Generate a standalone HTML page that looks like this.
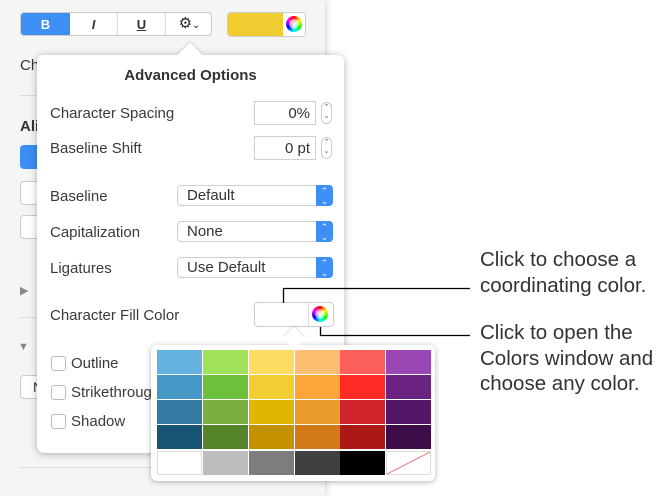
<!DOCTYPE html><html><head><style>
*{box-sizing:border-box;margin:0;padding:0}
body{width:668px;height:496px;overflow:hidden;background:#fff;font-family:"Liberation Sans",sans-serif;position:relative;color:#333}
.a{position:absolute}
.side{left:0;top:0;width:325px;height:496px;background:#f5f5f5;box-shadow:2px 0 6px rgba(0,0,0,.15)}
.lbl{font-size:15px;color:#3a3a3a}
.field{background:#fff;border:1px solid #cfcfcf;font-size:15px;text-align:right;padding:3px 5px}
.sel{background:#fff;border:1px solid #cfcfcf;border-radius:4px;font-size:15px;padding:1px 9px;height:21px}
.sel b{position:absolute;right:-1px;top:-1px;width:17px;height:21px;background:#3d8ef5;border-radius:0 4px 4px 0;color:#fff;font-size:9px;text-align:center;line-height:10px;padding-top:1px;font-weight:normal}
.step{width:11px;height:22px;border:1px solid #ccc;border-radius:6px;background:#fff;font-size:7px;text-align:center;line-height:9px;color:#555}
.cb{width:15px;height:15px;border:1px solid #bbb;border-radius:3px;background:#fff}
.grid div{position:absolute;width:45px;height:24px}
.note{font-size:20.5px;color:#333;line-height:25.5px}
</style></head><body>
<div class="a side"></div>
<div class="a" style="left:20px;top:467px;width:300px;height:1px;background:#ddd"></div>
<div class="a" style="left:20px;top:95px;width:300px;height:1px;background:#ddd"></div>
<div class="a" style="left:20px;top:317px;width:300px;height:1px;background:#ddd"></div>
<div class="a" style="left:20px;top:57px;font-size:15px;color:#333">Ch</div>
<div class="a" style="left:20px;top:118px;font-size:15px;font-weight:bold;color:#333">Ali</div>
<div class="a" style="left:20px;top:145px;width:30px;height:24px;background:#3d8ef5;border-radius:4px"></div>
<div class="a" style="left:20px;top:181px;width:30px;height:24px;background:#fff;border:1px solid #ccc;border-radius:4px"></div>
<div class="a" style="left:20px;top:215px;width:30px;height:24px;background:#fff;border:1px solid #ccc;border-radius:4px"></div>
<div class="a" style="left:20px;top:375px;width:30px;height:24px;background:#fff;border:1px solid #ccc;border-radius:4px;font-size:14px;padding:3px 12px">N</div>
<div class="a" style="left:20px;top:284px;color:#888;font-size:11px">▶</div>
<div class="a" style="left:18px;top:341px;color:#888;font-size:11px">▼</div>
<div class="a" style="left:20px;top:12px;width:192px;height:24px;background:#fff;border:1px solid #ccc;border-radius:4px;overflow:hidden">
<div class="a" style="left:0;top:0;width:49px;height:24px;background:#3d8ef5;color:#fff;font-weight:bold;font-size:13px;text-align:center;line-height:23px">B</div>
<div class="a" style="left:49px;top:0;width:48px;height:24px;border-right:1px solid #ddd;font-style:italic;font-weight:bold;font-size:13px;text-align:center;line-height:23px">I</div>
<div class="a" style="left:97px;top:0;width:48px;height:24px;border-right:1px solid #ddd;text-decoration:underline;font-weight:bold;font-size:13px;text-align:center;line-height:23px">U</div>
<div class="a" style="left:145px;top:0;width:47px;height:24px;font-size:15px;text-align:center;line-height:22px;color:#222">⚙<span style="font-size:10px">⌄</span></div>
</div>
<div class="a" style="left:227px;top:12px;width:79px;height:25px;border:1px solid #ccc;border-radius:4px;background:#fff;overflow:hidden">
<div class="a" style="left:0;top:0;width:55px;height:25px;background:#f0cd30"></div>
<div class="a" style="left:58px;top:3px;width:16px;height:16px;border-radius:50%;background:conic-gradient(red,yellow,lime,cyan,blue,magenta,red)"><div style="margin:3px;width:10px;height:10px;border-radius:50%;background:radial-gradient(#fff,rgba(255,255,255,.3))"></div></div>
</div>
<div class="a" style="left:37px;top:55px;width:307px;height:398px;background:#fff;border-radius:7px;box-shadow:0 1px 8px rgba(0,0,0,.3)"></div>
<div class="a" style="left:181px;top:46px;width:18px;height:18px;background:#fff;transform:rotate(45deg);box-shadow:-1px -1px 2px rgba(0,0,0,.15)"></div>
<div class="a" style="left:37px;top:55px;width:307px;height:20px;background:#fff;border-radius:7px 7px 0 0"></div>
<div class="a" style="left:37px;top:67px;width:307px;text-align:center;font-weight:bold;font-size:15px;color:#333">Advanced Options</div>
<div class="a lbl" style="left:50px;top:105px">Character Spacing</div>
<div class="a field" style="left:254px;top:101px;width:62px;height:24px">0%</div>
<div class="a step" style="left:321px;top:102px">⌃<br>⌄</div>
<div class="a lbl" style="left:50px;top:140px">Baseline Shift</div>
<div class="a field" style="left:254px;top:136px;width:62px;height:24px">0 pt</div>
<div class="a step" style="left:321px;top:137px">⌃<br>⌄</div>
<div class="a lbl" style="left:50px;top:188px">Baseline</div>
<div class="a sel" style="left:177px;top:185px;width:156px">Default<b>⌃<br>⌄</b></div>
<div class="a lbl" style="left:50px;top:224px">Capitalization</div>
<div class="a sel" style="left:177px;top:221px;width:156px">None<b>⌃<br>⌄</b></div>
<div class="a lbl" style="left:50px;top:260px">Ligatures</div>
<div class="a sel" style="left:177px;top:257px;width:156px">Use Default<b>⌃<br>⌄</b></div>
<div class="a lbl" style="left:50px;top:307px">Character Fill Color</div>
<div class="a" style="left:254px;top:302px;width:80px;height:25px;border:1px solid #ccc;border-radius:4px;background:#fff">
<div class="a" style="left:53px;top:0;width:1px;height:23px;background:#ddd"></div>
<div class="a" style="left:57px;top:3px;width:16px;height:16px;border-radius:50%;background:conic-gradient(red,yellow,lime,cyan,blue,magenta,red)"><div style="margin:3px;width:10px;height:10px;border-radius:50%;background:radial-gradient(#fff,rgba(255,255,255,.3))"></div></div>
</div>
<div class="a cb" style="left:51px;top:356px"></div><div class="a lbl" style="left:71px;top:355px">Outline</div>
<div class="a cb" style="left:51px;top:385px"></div><div class="a lbl" style="left:71px;top:384px">Strikethrough</div>
<div class="a cb" style="left:51px;top:414px"></div><div class="a lbl" style="left:71px;top:413px">Shadow</div>
<div class="a" style="left:151px;top:345px;width:284px;height:136px;background:#fff;border-radius:6px;box-shadow:0 1px 6px rgba(0,0,0,.3)"></div>
<div class="a" style="left:286px;top:330px;width:16px;height:16px;background:#fff;transform:rotate(45deg);box-shadow:-1px -1px 2px rgba(0,0,0,.12)"></div>
<div class="a" style="left:151px;top:345px;width:284px;height:12px;background:#fff;border-radius:6px 6px 0 0"></div>
<div class="a grid" style="left:157px;top:350px;width:274px;height:126px;background:#fff">
<div style="left:0;top:0;background:#63b2e0"></div><div style="left:46px;top:0;background:#9fe25a"></div><div style="left:92px;top:0;background:#fddc62"></div><div style="left:138px;top:0;background:#febe72"></div><div style="left:183px;top:0;background:#fd5f5b"></div><div style="left:229px;top:0;background:#9a46b5"></div>
<div style="left:0;top:25px;background:#4798c7"></div><div style="left:46px;top:25px;background:#6cc03a"></div><div style="left:92px;top:25px;background:#f2ce33"></div><div style="left:138px;top:25px;background:#fea53a"></div><div style="left:183px;top:25px;background:#fd2b24"></div><div style="left:229px;top:25px;background:#6b2381"></div>
<div style="left:0;top:50px;background:#327aa2"></div><div style="left:46px;top:50px;background:#7baf40"></div><div style="left:92px;top:50px;background:#e0b601"></div><div style="left:138px;top:50px;background:#eb9c2e"></div><div style="left:183px;top:50px;background:#d0222b"></div><div style="left:229px;top:50px;background:#541768"></div>
<div style="left:0;top:75px;background:#185574"></div><div style="left:46px;top:75px;background:#568529"></div><div style="left:92px;top:75px;background:#c49100"></div><div style="left:138px;top:75px;background:#d37a18"></div><div style="left:183px;top:75px;background:#ac1816"></div><div style="left:229px;top:75px;background:#3e0c48"></div>
<div style="left:0;top:101px;background:#fff;border:1px solid #ddd"></div><div style="left:46px;top:101px;background:#bdbdbd"></div><div style="left:92px;top:101px;background:#7d7d7d"></div><div style="left:138px;top:101px;background:#404040"></div><div style="left:183px;top:101px;background:#000"></div>
<div style="left:229px;top:101px;background:#fff;border:1px solid #ddd"><svg width="45" height="24" style="position:absolute;left:-1px;top:-1px"><line x1="1" y1="23" x2="44" y2="1" stroke="#f08080" stroke-width="1"/></svg></div>
</div>
<svg class="a" style="left:0;top:0" width="668" height="496"><path d="M283.5 303V288.5H470" fill="none" stroke="#000" stroke-width="1.3"/><path d="M320.5 327V335.5H470" fill="none" stroke="#000" stroke-width="1.3"/></svg>
<div class="a note" style="left:480px;top:247px">Click to choose a<br>coordinating color.</div>
<div class="a note" style="left:480px;top:320px">Click to open the<br>Colors window and<br>choose any color.</div>
</body></html>
